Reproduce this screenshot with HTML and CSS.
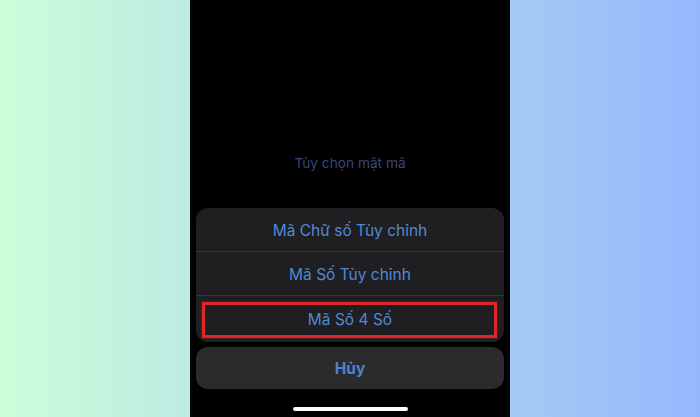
FILE: index.html
```html
<!DOCTYPE html>
<html lang="vi">
<head>
<meta charset="utf-8">
<link rel="stylesheet" href="styles.css">
</head>
<body>
<div class="page">
  <div class="side"></div>
  <div class="phone">
    <div class="title">Tùy chọn mật mã</div>
    <div class="sheet">
      <div class="row">Mã Chữ số Tùy chỉnh</div>
      <div class="row">Mã Số Tùy chỉnh</div>
      <div class="row last">Mã Số 4 Số<span class="highlight"></span></div>
    </div>
    <div class="cancel">Hủy</div>
    <div class="home"></div>
  </div>
  <div class="side"></div>
</div>
</body>
</html>
```

FILE: styles.css
```css
html, body {
  margin: 0;
  padding: 0;
  width: 700px;
  height: 417px;
  overflow: hidden;
}
body {
  background: linear-gradient(to right, #ccfed9 0%, #95b8fd 100%);
  font-family: Inter, "Noto Sans", "Liberation Sans", sans-serif;
}
.page {
  display: flex;
  height: 417px;
}
.side {
  width: 190px;
  flex: none;
}
.phone {
  width: 320px;
  flex: none;
  background: #000;
  display: flex;
  flex-direction: column;
  justify-content: flex-end;
  align-items: stretch;
  padding: 0 6px 6px;
  box-sizing: border-box;
}
.title {
  text-align: center;
  font-size: 13.7px;
  line-height: 20px;
  color: #3b4776;
  margin-bottom: 35px;
}
.sheet {
  background: #1f1f21;
  border-radius: 12px;
  overflow: hidden;
}
.row {
  position: relative;
  height: 44px;
  display: flex;
  align-items: center;
  justify-content: center;
  padding-top: 1px;
  box-sizing: border-box;
  font-size: 15.5px;
  color: #5088d6;
  border-bottom: 1px solid #38383a;
}
.row.last {
  height: 46px;
  border-bottom: none;
}
.highlight {
  position: absolute;
  left: 6px;
  right: 7px;
  top: 6px;
  bottom: 4px;
  border: 3px solid #dc262c;
  box-shadow: 0 0 2px rgba(220, 38, 44, 0.6);
}
.cancel {
  margin-top: 5px;
  height: 42px;
  border-radius: 12px;
  background: #2b2b2d;
  display: flex;
  align-items: center;
  justify-content: center;
  font-size: 15.5px;
  font-weight: 700;
  color: #4d84cf;
}
.home {
  align-self: center;
  margin-top: 18px;
  width: 115px;
  height: 4px;
  border-radius: 2px;
  background: #fff;
}
```
